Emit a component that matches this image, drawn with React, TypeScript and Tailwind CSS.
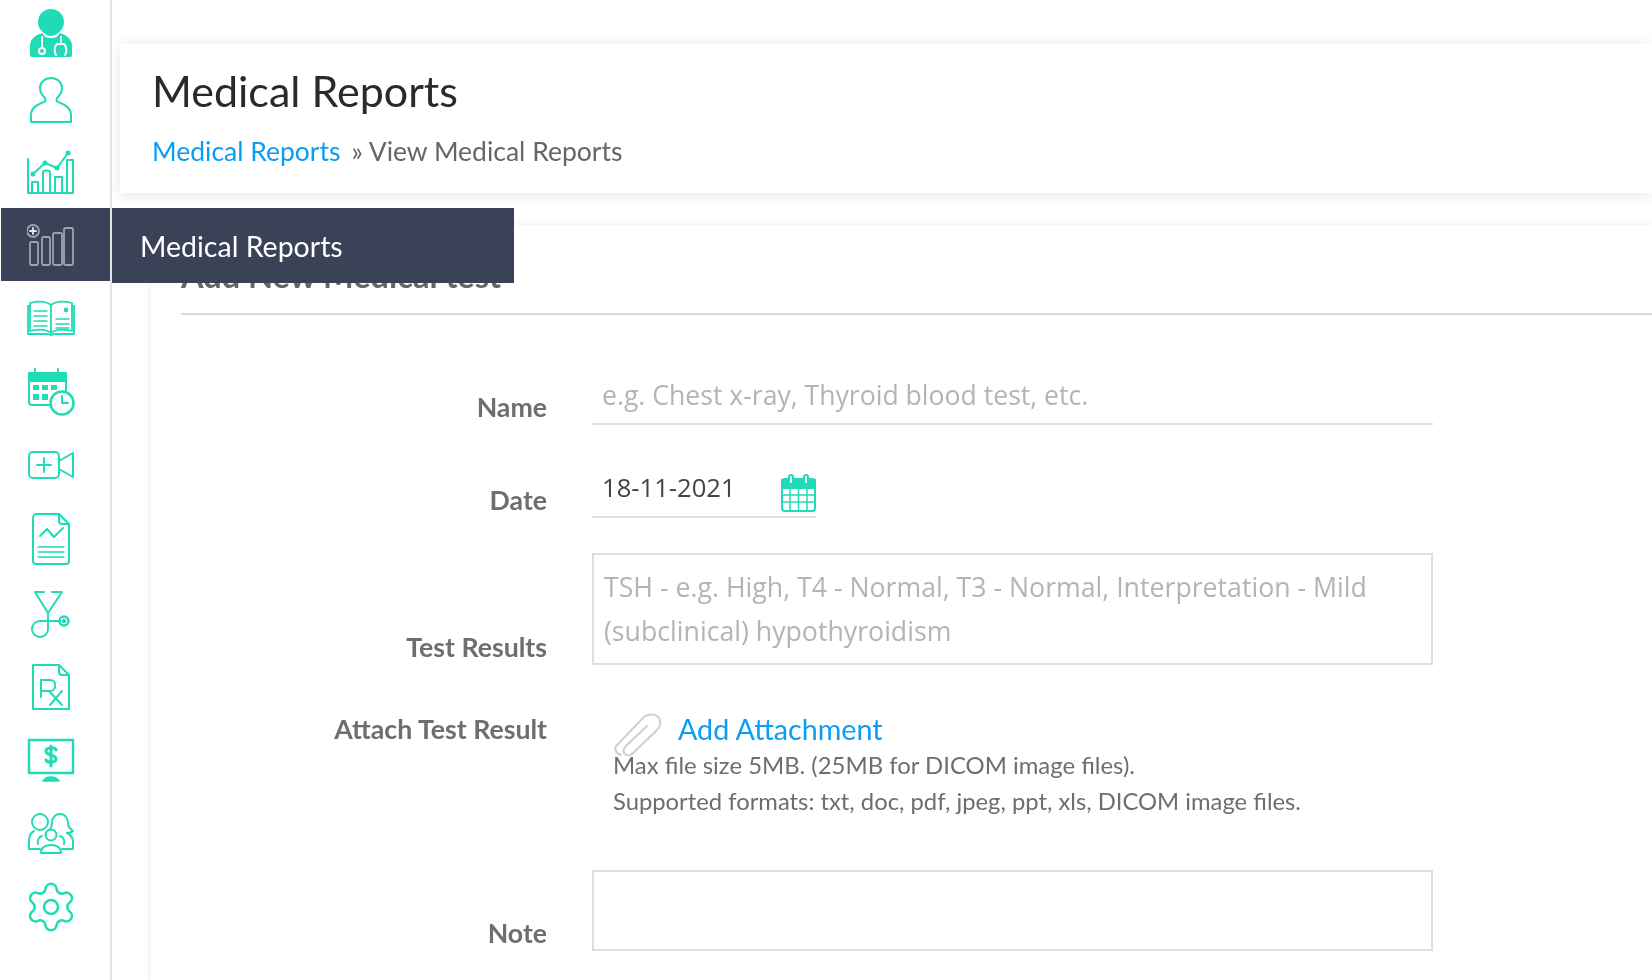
import type { ReactNode } from "react";
import { Settings } from "lucide-react";

const Teal = "#1fdcb6";

function Icon({ children, w = 48, h = 48, color = Teal, sw = 2 }: { children: ReactNode; w?: number; h?: number; color?: string; sw?: number }) {
  return (
    <svg width={w} height={h} viewBox={`0 0 ${w} ${h}`} fill="none" stroke={color} strokeWidth={sw} strokeLinecap="round" strokeLinejoin="round">
      {children}
    </svg>
  );
}

const icons = {
  doctor: (
    <Icon w={46} h={50}>
      <circle cx="23" cy="14" r="13" fill={Teal} stroke="none" />
      <path d="M2 47v-9c0-8 7-12 14-13h14c7 1 14 5 14 13v9a2 2 0 0 1-2 2H4a2 2 0 0 1-2-2z" fill={Teal} stroke="none" />
      <path d="M14 29v10M33 29v5M28 47c-2-3-2-8 1-11h7c3 3 3 8 1 11" stroke="#fff" />
      <circle cx="14" cy="43" r="3" stroke="#fff" />
      <path d="M16 26c2 4 12 4 14 0" stroke="#fff" />
    </Icon>
  ),
  user: (
    <Icon w={46} h={48}>
      <path d="M3 46v-7c0-8 8-11 13-13 2-1 2-3 0-5-3-3-4-6-4-9C12 6 17 2 23 2s11 4 11 10c0 3-1 6-4 9-2 2-2 4 0 5 5 2 13 5 13 13v7z" />
    </Icon>
  ),
  chart: (
    <Icon w={48} h={46}>
      <path d="M1 11v34h45" />
      <path d="M5 45V34h6v11M16 45V24c0-2 7-2 7 0v21M28 45V29h7v16M40 45V12h6v33" />
      <path d="M6 26l12-11 12 5 11-15" />
      <circle cx="6" cy="26" r="1.5" fill={Teal} />
      <circle cx="18" cy="15" r="1.5" fill={Teal} />
      <circle cx="30" cy="20" r="1.5" fill={Teal} />
      <circle cx="41" cy="5" r="1.5" fill={Teal} />
    </Icon>
  ),
  reports: (
    <Icon w={48} h={44} color="#9ea2ad" sw={1.8}>
      <circle cx="6" cy="8" r="6" />
      <path d="M6 5v6M3 8h6" stroke="#e6e7ea" />
      <rect x="3" y="19" width="8" height="23" rx="1.5" />
      <rect x="15" y="14" width="8" height="28" rx="1.5" />
      <rect x="26" y="10" width="9" height="32" rx="1.5" />
      <rect x="37" y="5" width="9" height="37" rx="1.5" />
    </Icon>
  ),
  book: (
    <Icon w={48} h={36} sw={1.8}>
      <path d="M3 3c8-2 16-2 21 2 5-4 13-4 21-2v28c-8-2-16-2-21 2-5-4-13-4-21-2z" />
      <path d="M3 6H1v28h19c2 0 3 1 4 1s2-1 4-1h19V6h-2M24 5v28" />
      <path d="M7 11h13M7 16h13M7 21h13M7 26h13M29 19h13M29 24h13M29 28h13" strokeWidth="1.4" />
      <circle cx="39" cy="10" r="1.5" fill={Teal} />
    </Icon>
  ),
  calendar: (
    <Icon w={48} h={48}>
      <path d="M30 37H5a3 3 0 0 1-3-3V8a3 3 0 0 1 3-3h31a3 3 0 0 1 3 3v16" />
      <path d="M2 5h37v8H2z" fill={Teal} />
      <path d="M8 1v7M31 1v7" />
      <g fill={Teal} stroke="none">
        <rect x="6" y="17" width="6" height="5" />
        <rect x="15" y="17" width="6" height="5" />
        <rect x="24" y="17" width="6" height="5" />
        <rect x="6" y="26" width="6" height="6" />
        <rect x="15" y="26" width="6" height="6" />
      </g>
      <circle cx="35" cy="35" r="11.5" fill="#fff" strokeWidth="2.5" />
      <path d="M35 28v7h6" />
    </Icon>
  ),
  video: (
    <Icon w={48} h={30}>
      <rect x="2" y="2" width="30" height="26" rx="4" />
      <path d="M32 11l14-8v24l-14-8" />
      <path d="M17 8v14M10 15h14" />
    </Icon>
  ),
  report: (
    <Icon w={38} h={52}>
      <path d="M5 1h22l10 10v37a3 3 0 0 1-3 3H4a3 3 0 0 1-3-3V5a4 4 0 0 1 4-4z" />
      <path d="M27 1v7a3 3 0 0 0 3 3h7" />
      <path d="M8 23l7-7 7 8 9-9" />
      <path d="M6 34h26M6 39h26M6 44h26" strokeWidth="1.4" />
    </Icon>
  ),
  stethoscope: (
    <Icon w={40} h={48}>
      <path d="M13 2H4l13 21L31 2h-10" />
      <path d="M17 23v16a8 8 0 1 1-8-8h20" />
      <circle cx="33" cy="31" r="4.5" strokeWidth="2.5" />
      <circle cx="33" cy="31" r="1.2" fill={Teal} />
    </Icon>
  ),
  rx: (
    <Icon w={38} h={46}>
      <path d="M1 1h26l10 10v34H1z" />
      <path d="M27 1v7a3 3 0 0 0 3 3h7" />
      <path d="M9 33V16h9c7 0 7 11 0 11H9M17 27l13 14M30 27L18 41" />
    </Icon>
  ),
  monitor: (
    <Icon w={48} h={44} sw={2.5}>
      <rect x="2" y="2" width="44" height="33" />
      <path d="M16 43c2-3 4-4 8-4s6 1 8 4z" fill={Teal} strokeWidth="1.5" />
      <path d="M29 12c-1-3-10-3-10 1 0 5 10 3 10 8 0 4-9 4-10 1M24 8v20" strokeWidth="3" />
    </Icon>
  ),
  group: (
    <Icon w={48} h={42}>
      <circle cx="13" cy="10" r="8" />
      <path d="M33 2c5 0 8 4 8 9 0 4 2 6 5 8-2 2-4 2-6 2M33 2c-5 0-8 4-8 9 0 3-1 5-2 7" />
      <circle cx="24" cy="23" r="5.5" />
      <path d="M7 19C3 21 2 25 2 29v8h11M40 21c4 2 6 5 6 9v7H35M14 41c0-5 4-8 10-8s10 3 10 8zM15 24c-3 1-5 4-4 8M33 24c3 1 5 4 4 8" />
    </Icon>
  ),
  gear: <Settings size={56} color={Teal} strokeWidth={1.1} />,
};

const navItems = [
  { icon: icons.doctor, row: "h-[65px]" },
  { icon: icons.user, row: "h-[69px]" },
  { icon: icons.chart, row: "h-[74px]" },
  { icon: icons.reports, row: "h-[73px] ml-[1px] bg-[#3a4257]" },
  { icon: icons.book, row: "h-[74px]" },
  { icon: icons.calendar, row: "h-[73px]" },
  { icon: icons.video, row: "h-[73px]" },
  { icon: icons.report, row: "h-[76px]" },
  { icon: icons.stethoscope, row: "h-[74px]" },
  { icon: icons.rx, row: "h-[72px]" },
  { icon: icons.monitor, row: "h-[73px]" },
  { icon: icons.group, row: "h-[74px]" },
  { icon: icons.gear, row: "h-[73px]" },
];

function Sidebar() {
  return (
    <aside className="relative z-20 flex h-full w-[112px] shrink-0 flex-col border-r-2 border-[#e4e4e4] bg-white">
      {navItems.map((item, i) => (
        <div key={i} className={`flex shrink-0 items-center justify-center pr-[9px] ${item.row}`}>
          {item.icon}
        </div>
      ))}
      <div className="absolute left-[112px] top-[208px] flex h-[75px] w-[402px] items-center bg-[#3a4257] pl-[28px] pt-[2px] text-[28.5px] text-white">
        Medical Reports
      </div>
    </aside>
  );
}

function Field({ label, children }: { label: string; children: ReactNode }) {
  return (
    <div className="flex items-end">
      <label className="w-[366px] shrink-0 pb-[6px] text-right text-[26.7px] font-bold leading-[24px] text-[#6e6e6e]">{label}</label>
      <div className="ml-[45px] min-w-0">{children}</div>
    </div>
  );
}

export default function App() {
  return (
    <div className="flex h-[980px] w-[1652px] overflow-hidden bg-white font-['Lato',sans-serif] blur-[0.4px]">
      <Sidebar />
      <main className="min-w-0 flex-1">
        <header className="ml-[8px] mt-[44px] h-[149px] bg-white pl-[32px] pt-[22px] shadow-[0_2px_14px_rgba(0,0,0,0.1)]">
          <h1 className="text-[43px] leading-[50px] text-[#2a2a2a]">Medical Reports</h1>
          <p className="mt-[19px] text-[26.5px] leading-[32px] text-[#666]">
            <a className="text-[#0a9df5]">Medical Reports</a>
            <span className="ml-[11px]">» View Medical Reports</span>
          </p>
        </header>

        <section className="ml-[39px] mt-[32px] h-[760px] bg-white pl-[30px] shadow-[0_0_8px_rgba(0,0,0,0.08)]">
          <h2 className="h-[90px] border-b-2 border-[#d5d8e0] pt-[35px] text-[32.5px] font-bold leading-[32px] text-[#666]">Add New Medical test</h2>

          <form className="flex flex-col">
            <div className="mt-[60px]">
              <Field label="Name">
                <div className="flex h-[50px] w-[841px] items-center border-b-2 border-[#dedede] pb-[7px] pl-[10px] text-[#b4b4b4]">
                  <span className="font-['Open_Sans',sans-serif] text-[26.6px]">e.g. Chest x-ray, Thyroid blood test, etc.</span>
                </div>
              </Field>
            </div>

            <div className="mt-[43px]">
              <Field label="Date">
                <div className="flex h-[50px] w-[224px] items-center justify-between border-b-2 border-[#dedede] pl-[10px]">
                  <span className="pb-[8px] font-['Open_Sans',sans-serif] text-[25.6px] text-[#444]">18-11-2021</span>
                  <svg width="35" height="38" viewBox="0 0 35 38" className="mt-[2px]" fill="none" stroke={Teal} strokeWidth="2">
                    <rect x="1" y="5" width="33" height="32" rx="3" />
                    <path d="M1 6h33v8H1z" fill={Teal} />
                    <rect x="8" y="1" width="4" height="9" rx="2" fill="#fff" />
                    <rect x="23" y="1" width="4" height="9" rx="2" fill="#fff" />
                    <path d="M1 21h33M1 28h33M9 14v23M17.5 14v23M26 14v23" strokeWidth="1.5" />
                  </svg>
                </div>
              </Field>
            </div>

            <div className="mt-[35px]">
              <Field label="Test Results">
                <div className="h-[112px] w-[841px] border-2 border-[#dedede] px-[10px] pt-[10px] font-['Open_Sans',sans-serif] text-[26.7px] leading-[44px] text-[#b4b4b4]">
                  TSH - e.g. High, T4 - Normal, T3 - Normal, Interpretation - Mild (subclinical) hypothyroidism
                </div>
              </Field>
            </div>

            <div className="mt-[48px] flex items-start">
              <label className="w-[366px] shrink-0 text-right text-[26.7px] font-bold leading-[32px] text-[#6e6e6e]">Attach Test Result</label>
              <div className="relative ml-[66px]">
                <svg width="50" height="46" viewBox="0 0 50 46" className="absolute top-0 left-0" fill="none" stroke="#cfcfcf" strokeWidth="2" strokeLinecap="round">
                  <path d="M8 42c-4-1-7-5-5-9L30 5c5-5 16-5 17 3 1 4-1 7-4 10L20 40c-3 3-6 3-8 1-2-2-2-5 1-8L34 13" />
                </svg>
                <a className="ml-[65px] block text-[28.7px] leading-[32px] text-[#0a9df5]">Add Attachment</a>
                <p className="mt-[1px] text-[23.9px] leading-[37px] text-[#6e6e6e]">Max file size 5MB. (25MB for DICOM image files).</p>
                <p className="text-[23.8px] leading-[36px] text-[#6e6e6e]">Supported formats: txt, doc, pdf, jpeg, ppt, xls, DICOM image files.</p>
              </div>
            </div>

            <div className="mt-[51px]">
              <Field label="Note">
                <div className="h-[81px] w-[841px] border-2 border-[#dedede]" />
              </Field>
            </div>
          </form>
        </section>
      </main>
    </div>
  );
}
